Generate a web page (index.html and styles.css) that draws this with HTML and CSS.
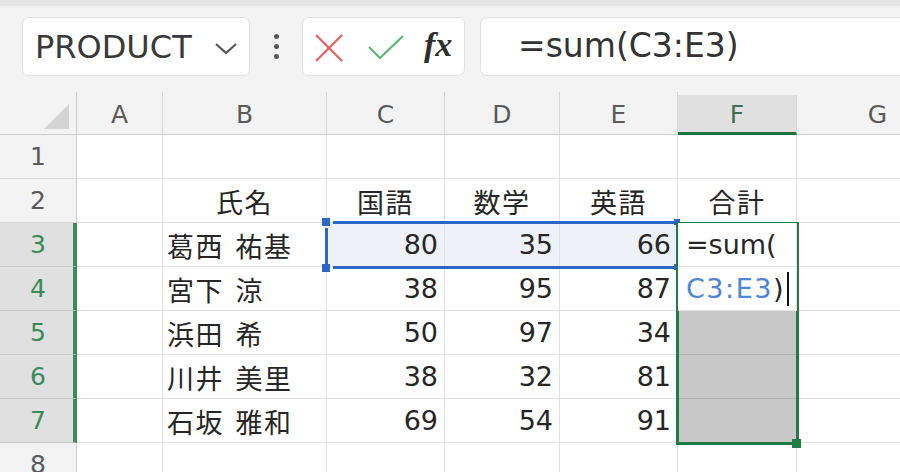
FILE: index.html
```html
<!DOCTYPE html>
<html lang="ja">
<head>
<meta charset="utf-8">
<title>Excel</title>
<link rel="stylesheet" href="styles.css">
</head>
<body>
<div class="app">
  <div class="topband"></div>
  <div class="toolbar">
    <div class="namebox">
      <span class="name">PRODUCT</span>
      <svg class="chev" width="24" height="14" viewBox="0 0 24 14"><polyline points="2,2 12,11 22,2" fill="none" stroke="#555" stroke-width="2.2"/></svg>
    </div>
    <div class="dots"><span></span><span></span><span></span></div>
    <div class="btnbox">
      <svg class="ic-x" width="30" height="30" viewBox="0 0 30 30"><line x1="2" y1="2" x2="28" y2="28" stroke="#e46060" stroke-width="2.2"/><line x1="28" y1="2" x2="2" y2="28" stroke="#e46060" stroke-width="2.2"/></svg>
      <svg class="ic-ok" width="38" height="28" viewBox="0 0 38 28"><polyline points="2,14 13,25 36,3" fill="none" stroke="#5cb874" stroke-width="2.2"/></svg>
      <span class="fx">fx</span>
    </div>
    <div class="fbox"><span class="ftext">=sum(C3:E3)</span></div>
  </div>

  <div class="sheet">
    <div class="corner"><svg width="25" height="25" viewBox="0 0 25 25"><polygon points="25,0 25,25 0,25" fill="#d4d4d4"/></svg></div>
    <div class="ch">A</div><div class="ch">B</div><div class="ch">C</div><div class="ch">D</div><div class="ch">E</div><div class="ch sel">F</div><div class="ch">G</div>

    <div class="rh">1</div><div class="c"></div><div class="c"></div><div class="c"></div><div class="c"></div><div class="c"></div><div class="c"></div><div class="c"></div>

    <div class="rh">2</div><div class="c"></div><div class="c jp ctr">氏名</div><div class="c jp ctr">国語</div><div class="c jp ctr">数学</div><div class="c jp ctr">英語</div><div class="c jp ctr">合計</div><div class="c"></div>

    <div class="rh sel">3</div><div class="c"></div><div class="c jp">葛西 祐基</div><div class="c num hl">80</div><div class="c num hl">35</div><div class="c num hl">66</div><div class="c f">=sum(</div><div class="c"></div>

    <div class="rh sel">4</div><div class="c"></div><div class="c jp">宮下 涼</div><div class="c num">38</div><div class="c num">95</div><div class="c num">87</div><div class="c f"><span class="ref">C3:E3</span>)<span class="caret"></span></div><div class="c"></div>

    <div class="rh sel">5</div><div class="c"></div><div class="c jp">浜田 希</div><div class="c num">50</div><div class="c num">97</div><div class="c num">34</div><div class="c gray"></div><div class="c"></div>

    <div class="rh sel">6</div><div class="c"></div><div class="c jp">川井 美里</div><div class="c num">38</div><div class="c num">32</div><div class="c num">81</div><div class="c gray"></div><div class="c"></div>

    <div class="rh sel">7</div><div class="c"></div><div class="c jp">石坂 雅和</div><div class="c num">69</div><div class="c num">54</div><div class="c num">91</div><div class="c gray"></div><div class="c"></div>

    <div class="rh">8</div><div class="c"></div><div class="c"></div><div class="c"></div><div class="c"></div><div class="c"></div><div class="c"></div><div class="c"></div>

    <div class="range-top"></div>
    <div class="range-bot"></div>
    <div class="range-left"></div>
    <div class="h h-tl"></div>
    <div class="h h-bl"></div>
    <div class="hs hs-tr"></div>
    <div class="hs hs-br"></div>
    <div class="active"></div>
    <div class="fill-handle"></div>
  </div>
</div>
</body>
</html>
```

FILE: styles.css
```css
html, body {
  margin: 0;
  padding: 0;
}
body {
  background: #f3f3f3;
  font-family: "DejaVu Sans", "Noto Sans CJK JP", sans-serif;
  color: #262626;
}
.app {
  width: 900px;
  height: 472px;
  overflow: hidden;
}
.topband {
  height: 6px;
  background: #e6e6e6;
}
.toolbar {
  display: flex;
  align-items: stretch;
  height: 59px;
  margin-top: 11px;
  padding-left: 22px;
}
.namebox {
  width: 228px;
  box-sizing: border-box;
  background: #fff;
  border: 1px solid #e2e2e2;
  border-radius: 7px;
  display: flex;
  align-items: center;
  padding-left: 12px;
}
.name {
  font-size: 32px;
  color: #3a3a3a;
}
.chev {
  margin-left: auto;
  margin-right: 11px;
  margin-top: 4px;
}
.dots {
  width: 52px;
  display: flex;
  flex-direction: column;
  align-items: center;
  justify-content: center;
  gap: 5px;
}
.dots span {
  width: 5px;
  height: 5px;
  border-radius: 50%;
  background: #555;
}
.btnbox {
  width: 163px;
  box-sizing: border-box;
  background: #fff;
  border: 1px solid #e2e2e2;
  border-radius: 7px;
  display: flex;
  align-items: center;
  padding-left: 11px;
}
.ic-x { margin-top: 2px; }
.ic-ok { margin-left: 23px; }
.fx {
  margin-left: 19px;
  font-family: "Liberation Serif", "DejaVu Serif", serif;
  font-style: italic;
  font-weight: bold;
  font-size: 34px;
  color: #2e2e2e;
  margin-top: -4px;
}
.fbox {
  margin-left: 15px;
  flex: 1;
  background: #fff;
  border: 1px solid #e2e2e2;
  border-right: none;
  border-radius: 7px 0 0 7px;
  display: flex;
  align-items: center;
  padding-left: 37px;
}
.ftext {
  font-size: 33px;
  color: #333;
  margin-top: -2px;
}

.sheet {
  position: relative;
  margin-top: 16px;
  display: grid;
  grid-template-columns: 77px 86px 164px 118px 115px 118px 119px 162px;
  grid-template-rows: 43px repeat(8, 44px);
}
.sheet > div {
  box-sizing: border-box;
}
.corner {
  background: #f3f3f3;
  border-right: 1px solid #cfcfcf;
  border-bottom: 1px solid #cfcfcf;
  display: flex;
  justify-content: flex-end;
  align-items: flex-end;
  padding: 0 7px 5px 0;
}
.ch {
  background: #f3f3f3;
  border-right: 1px solid #d8d8d8;
  border-bottom: 1px solid #cfcfcf;
  display: flex;
  align-items: center;
  justify-content: center;
  font-size: 25px;
  color: #5a5a5a;
  padding-top: 2px;
}
.ch.sel {
  background: #e0e0e0;
  border-bottom: 3px solid #207245;
  color: #3d6e50;
  margin-top: 3px;
}
.rh {
  background: #f3f3f3;
  border-right: 1px solid #cfcfcf;
  border-bottom: 1px solid #d8d8d8;
  display: flex;
  align-items: center;
  justify-content: center;
  font-size: 25px;
  color: #5a5a5a;
}
.rh.sel {
  background: #e0e0e0;
  color: #3b8a5a;
  border-right: 4px solid #3f8a5b;
  border-bottom-color: #cacaca;
  padding-left: 3px;
}
.c {
  background: #fff;
  border-right: 1px solid #e2e2e2;
  border-bottom: 1px solid #e2e2e2;
  display: flex;
  align-items: center;
  font-size: 27px;
  white-space: nowrap;
}
.jp {
  font-family: "Noto Sans CJK JP", sans-serif;
  font-size: 27px;
  letter-spacing: 1.5px;
  word-spacing: 4px;
  padding-left: 4px;
  padding-top: 2px;
}
.ctr {
  justify-content: center;
  padding-left: 0;
}
.num {
  justify-content: flex-end;
  padding-right: 6px;
}
.hl {
  background: #eef2f8;
}
.f {
  padding-left: 8px;
  position: relative;
  z-index: 2;
}
.ref {
  color: #4d86d6;
  letter-spacing: 1.5px;
}
.caret {
  display: inline-block;
  width: 2px;
  height: 34px;
  background: #111;
  margin-left: 4px;
}
.gray {
  background: #c8c8c8;
  border-bottom-color: #b3b3b3;
}

.range-top, .range-bot {
  position: absolute;
  left: 333px;
  width: 342px;
  height: 3px;
  background: #2c66c9;
}
.range-top { top: 129px; }
.range-bot { top: 174px; }
.range-left {
  position: absolute;
  left: 325px;
  top: 136px;
  width: 3px;
  height: 36px;
  background: #2c66c9;
}
.h {
  position: absolute;
  width: 8px;
  height: 8px;
  background: #2c66c9;
  left: 322px;
}
.h-tl { top: 126px; }
.h-bl { top: 172px; }
.hs {
  position: absolute;
  width: 6px;
  height: 6px;
  background: #2c66c9;
  left: 674px;
}
.hs-tr { top: 127px; }
.hs-br { top: 172px; }
.active {
  position: absolute;
  left: 676px;
  top: 130px;
  width: 123px;
  height: 223px;
  border: 3px solid #1f7a45;
  box-sizing: border-box;
  z-index: 1;
}
.fill-handle {
  position: absolute;
  left: 792px;
  top: 347px;
  width: 9px;
  height: 9px;
  background: #1f7a45;
  z-index: 3;
}
```
